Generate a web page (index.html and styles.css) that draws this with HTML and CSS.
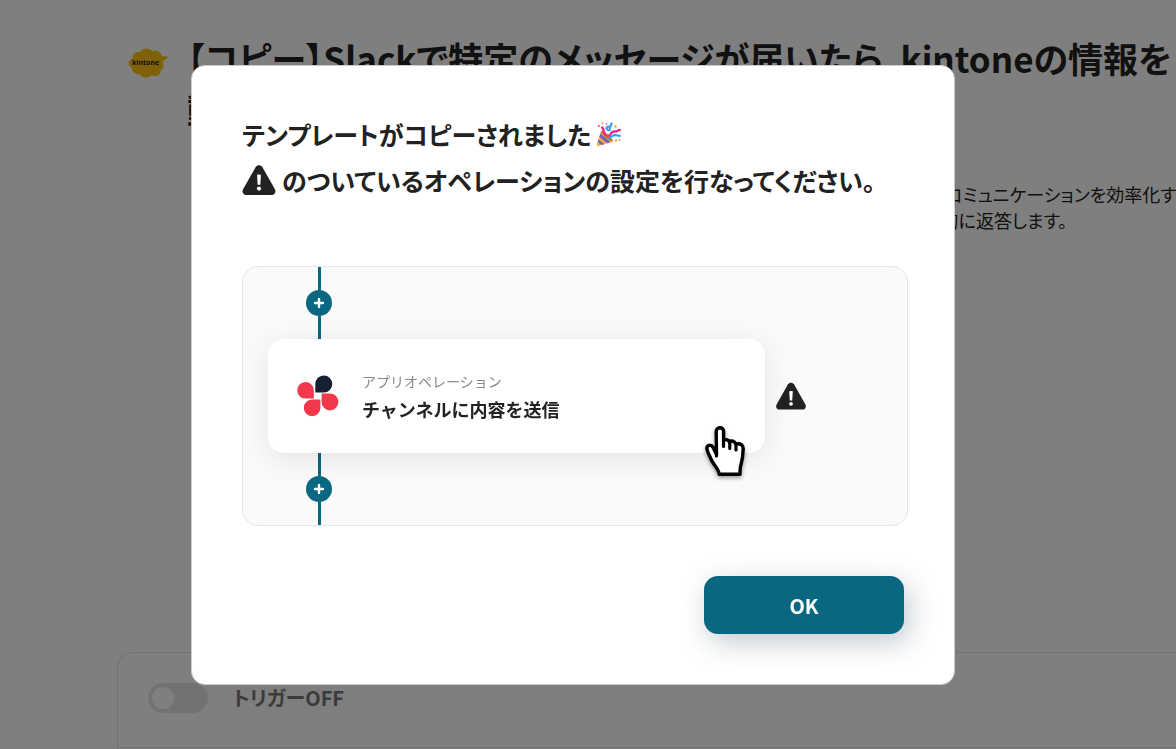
FILE: index.html
```
<!DOCTYPE html>
<html lang="ja">
<head>
<meta charset="utf-8">
<meta name="viewport" content="width=device-width, initial-scale=1">
<title>テンプレートのコピー</title>
<link rel="stylesheet" href="styles.css">
</head>
<body>
<div class="page">
  <header class="header">
    <svg class="header-logo" viewBox="0 0 42 32" role="img" aria-label="kintone">
      <path fill="#ffc20e" d="M41.500 10.500C38 9.500 36 8.800 34 9.600C33 4.500 28 2.300 24.500 4.200C21 .2 13.500 .8 12 5.200C7 4 3.500 8 4.800 11.500C-1 13-.5 19.500 4 21C3.500 25.500 9 28.200 12 27.400C14 32 22 30.800 23.500 28C28 30.500 33.500 27.500 32.500 23.500C36.500 22 36 17 34.600 15.500C35.500 13 38 11.500 41.500 10.500Z"/>
      <text x="4" y="18" class="header-logo-text">kintone</text>
    </svg>
    <div class="header-body">
      <h1 class="title">【コピー】Slackで特定のメッセージが届いたら、kintoneの情報を自<br>動で返答</h1>
      <p class="description">Slackの特定のチャンネルでお問い合わせ内容を受け取り、社内の業務情報を自動検索して返答し、コミュニケーションを効率化するフローです。<br>投稿に含まれるキーワードから、kintoneに登録された最新の顧客対応情報と内容を検索して自動的に返答します。</p>
    </div>
  </header>
  <section class="flow">
    <div class="flow-bar">
      <input type="checkbox" class="switch" id="trigger">
      <label class="switch-label" for="trigger">トリガーOFF</label>
    </div>
  </section>
</div>

<div class="overlay">
  <div class="modal" role="dialog" aria-modal="true" aria-labelledby="modal-title">
    <h2 class="modal-title" id="modal-title">
      <span class="modal-line">テンプレートがコピーされました
        <svg class="party" viewBox="0 0 24 24" role="img" aria-label="🎉">
          <path fill="#f5a83a" d="M4 9C7 10 14 16 16 19.500L1.500 24C.3 24 0 23.500 0 22.500Z"/>
          <path fill="#6a5fc4" d="M3.300 11.500L13.500 20.300L10.300 21.300L2.400 14.800ZM1.500 17.500L7.300 22.200L4.500 23.100L.8 20Z"/>
          <path fill="#b86a2a" d="M4 9C7.500 9 15 15 16 19.500C12.500 19 5.500 13.500 4 9Z"/>
          <path fill="none" stroke="#f5278f" stroke-width="2.400" stroke-linecap="round" d="M5.200 5.500C7.500 7.500 5.500 9.500 8.500 13M12 13.500C15 12 14 9 17.500 9.500C20.500 10 20 8 22.800 8"/>
          <path fill="none" stroke="#2ba5ee" stroke-width="2.200" stroke-linecap="round" d="M14.500 1.500C13.500 4 13 6 12.500 8C9 8.500 8.500 4.500 12 4.500M12.500 16C16 12.500 18.500 12.500 22.800 14"/>
          <g fill="#f5278f"><circle cx="1.800" cy="4" r="1"/><circle cx="9.500" cy="2" r=".8"/></g>
          <g fill="#f5a83a"><circle cx="5.500" cy="1.200" r="1"/><circle cx="18.500" cy="4.500" r="1.300"/><circle cx="19" cy="18.500" r="1.300"/></g>
          <circle cx="22.500" cy="18" r=".8" fill="#f5278f"/>
        </svg>
      </span>
      <span class="modal-line">
        <svg class="warning warning-large" viewBox="0 0 32 29" aria-hidden="true">
          <path fill="#222" d="M12.800 2C14.200-.3 17.800-.3 19.200 2L31.400 23.500C32.600 26 31.200 29 28.300 29H3.700C.8 29-.6 26 .6 23.500Z"/>
          <path fill="#fff" d="M14.100 9.500Q16 8.800 17.900 9.500L17.300 19.200H14.700Z"/>
          <circle cx="16" cy="22.800" r="2" fill="#fff"/>
        </svg>
        <span>のついているオペレーションの設定を行なってください。</span>
      </span>
    </h2>

    <div class="preview">
      <div class="connector">
        <span class="connector-line"></span>
        <svg class="plus" viewBox="0 0 26 26" aria-hidden="true"><circle cx="13" cy="13" r="13" fill="#0a6780"/><path d="M13 9v8M9 13h8" stroke="#fff" stroke-width="2.400" stroke-linecap="round"/></svg>
        <span class="connector-line"></span>
      </div>
      <div class="operation-row">
        <div class="operation">
          <svg class="operation-icon" viewBox="0 0 42 42" aria-hidden="true">
            <path fill="#162032" d="M18.300 17.500V9.200A8.500 8.500 0 1 1 26.800 17.500Z"/>
            <path fill="#f2384a" d="M16.800 23.600H9A8.300 8.300 0 1 1 16.800 15.500Z"/>
            <path fill="#f2384a" d="M24.600 18.600H33A8.400 8.400 0 1 1 24.600 26.800Z"/>
            <path fill="#f2384a" d="M23.400 24.600V33A8.300 8.300 0 1 1 15 24.600Z"/>
          </svg>
          <div class="operation-text">
            <p class="operation-kind">アプリオペレーション</p>
            <p class="operation-name">チャンネルに内容を送信</p>
          </div>
          <svg class="pointer" viewBox="0 0 40 50" aria-hidden="true">
            <path fill="#fff" stroke="#000" stroke-width="3.400" stroke-linejoin="round" stroke-linecap="round" d="M14.200 48.200C14 43.500 8 38 6.200 33.500C4.600 29.500 2 25.500 1.900 22.500C1.800 18.800 6 18.200 8.200 21.500L11.500 28.500L11.200 6C11 .6 18.400 .4 18.600 5.500V14.500C21 12.800 23.800 13.800 24.400 16C26.500 14.200 29.500 14.800 30.800 18.200C35 16.700 38.400 19 38.200 23C38 29 37.500 33.500 36 38.500C35 41.500 35 44.500 35 48.200Z"/>
            <path fill="none" stroke="#000" stroke-width="3.200" stroke-linecap="round" d="M18.500 14V20.500M24.800 16V22.500M31 18.500V24M11.500 28V30"/>
          </svg>
        </div>
        <svg class="warning" viewBox="0 0 32 29" aria-hidden="true">
          <path fill="#222" d="M12.800 2C14.200-.3 17.800-.3 19.200 2L31.400 23.500C32.600 26 31.200 29 28.300 29H3.700C.8 29-.6 26 .6 23.500Z"/>
          <path fill="#fff" d="M14.100 9.500Q16 8.800 17.900 9.500L17.300 19.200H14.700Z"/>
          <circle cx="16" cy="22.800" r="2" fill="#fff"/>
        </svg>
      </div>
      <div class="connector">
        <span class="connector-line"></span>
        <svg class="plus" viewBox="0 0 26 26" aria-hidden="true"><circle cx="13" cy="13" r="13" fill="#0a6780"/><path d="M13 9v8M9 13h8" stroke="#fff" stroke-width="2.400" stroke-linecap="round"/></svg>
        <span class="connector-line"></span>
      </div>
    </div>

    <button type="button" class="ok">OK</button>
  </div>
</div>
</body>
</html>
```
FILE: styles.css
```
* {
  box-sizing: border-box;
}

body {
  margin: 0;
  color: #222;
  background: #fff;
  font-family: "Noto Sans CJK JP", "Noto Sans", sans-serif;
  font-feature-settings: "palt";
  overflow: hidden;
}

h1, h2, p {
  margin: 0;
}

.page {
  display: flex;
  flex-direction: column;
  height: 100vh;
  padding-left: 117px;
  overflow: hidden;
}

.header {
  display: flex;
  flex: 1;
  gap: 17px;
  padding: 32px 0 0 11px;
}

.header-logo {
  flex: none;
  width: 42px;
  height: 32px;
  margin-top: 15px;
}

.header-logo-text {
  fill: #222;
  font: 700 7px "Noto Sans", sans-serif;
}

.header-body {
  white-space: nowrap;
}

.title {
  font-size: 35px;
  font-weight: 700;
  line-height: 51px;
}

.description {
  margin-top: 47px;
  padding-left: 5px;
  font-size: 18px;
  line-height: 26px;
}

.flow {
  flex: none;
  height: 97px;
  margin-right: -40px;
  border: 1px solid #e5e5e5;
  border-bottom: 0;
  border-radius: 16px 16px 0 0;
}

.flow-bar {
  display: flex;
  align-items: center;
  gap: 11px;
  height: 95px;
  padding: 0 30px 4px;
  border-bottom: 1px solid #e5e5e5;
}

.switch {
  display: flex;
  align-items: center;
  width: 60px;
  height: 30px;
  margin: 0;
  padding: 4px;
  border-radius: 15px;
  background: #e5e5e5;
  appearance: none;
}

.switch::before {
  width: 22px;
  height: 22px;
  border-radius: 50%;
  background: #fff;
  content: "";
}

.switch-label {
  padding: 11px 14px;
  border-radius: 24px;
  color: #777;
  background: #fcfcfc;
  font-size: 20px;
  font-weight: 700;
  line-height: 28px;
}

.overlay {
  position: fixed;
  inset: 0;
  display: flex;
  align-items: center;
  justify-content: center;
  padding-right: 30px;
  background: rgba(0, 0, 0, .5);
}

.modal {
  display: flex;
  flex-direction: column;
  width: 65%;
  min-width: 764px;
  padding: 45px 46px 50px 50px;
  border: 1px solid #ccc;
  border-radius: 14px;
  background: #fff;
}

.modal-title {
  font-size: 25px;
  font-weight: 700;
  line-height: 46px;
}

.modal-line {
  display: flex;
  align-items: center;
  gap: 6px;
  white-space: nowrap;
}

.party {
  width: 24px;
  height: 24px;
}

.warning {
  flex: none;
  width: 30px;
  height: 28px;
}

.warning-large {
  width: 34px;
  height: 30px;
}

.preview {
  margin-top: 63px;
  padding: 0 25px;
  border: 1px solid #e5e5e5;
  border-radius: 16px;
  background: #fafafa;
}

.connector {
  display: flex;
  flex-direction: column;
  align-items: center;
  width: 26px;
  height: 72px;
  margin-left: 38px;
}

.connector-line {
  flex: 1;
  width: 3px;
  background: #0a6780;
}

.plus {
  display: block;
  width: 26px;
  height: 26px;
}

.operation-row {
  display: flex;
  align-items: center;
  gap: 11px;
}

.operation {
  position: relative;
  display: flex;
  flex: none;
  align-items: center;
  gap: 23px;
  width: 81%;
  height: 114px;
  padding: 0 29px;
  border-radius: 16px;
  background: #fff;
  box-shadow: 0 6px 30px rgba(0, 0, 0, .09);
}

.operation-icon {
  width: 42px;
  height: 42px;
}

.operation-text {
  padding-bottom: 2px;
  font-feature-settings: normal;
}

.operation-kind {
  color: #888;
  font-size: 14px;
  font-weight: 400;
  line-height: 28px;
}

.operation-name {
  font-size: 18px;
  font-weight: 700;
  line-height: 28px;
}

.pointer {
  position: absolute;
  right: 20px;
  bottom: -23px;
  width: 40px;
  height: 50px;
  overflow: visible;
  filter: drop-shadow(0 2px 2px rgba(0, 0, 0, .4));
}

.ok {
  align-self: flex-end;
  width: 200px;
  height: 58px;
  margin: 50px 4px 0 0;
  padding: 2px 0 0;
  border: 0;
  border-radius: 14px;
  color: #fff;
  background: #0a6780;
  box-shadow: 5px 8px 28px rgba(20, 45, 65, .25);
  font: 700 20px "Noto Sans CJK JP", sans-serif;
}
```
